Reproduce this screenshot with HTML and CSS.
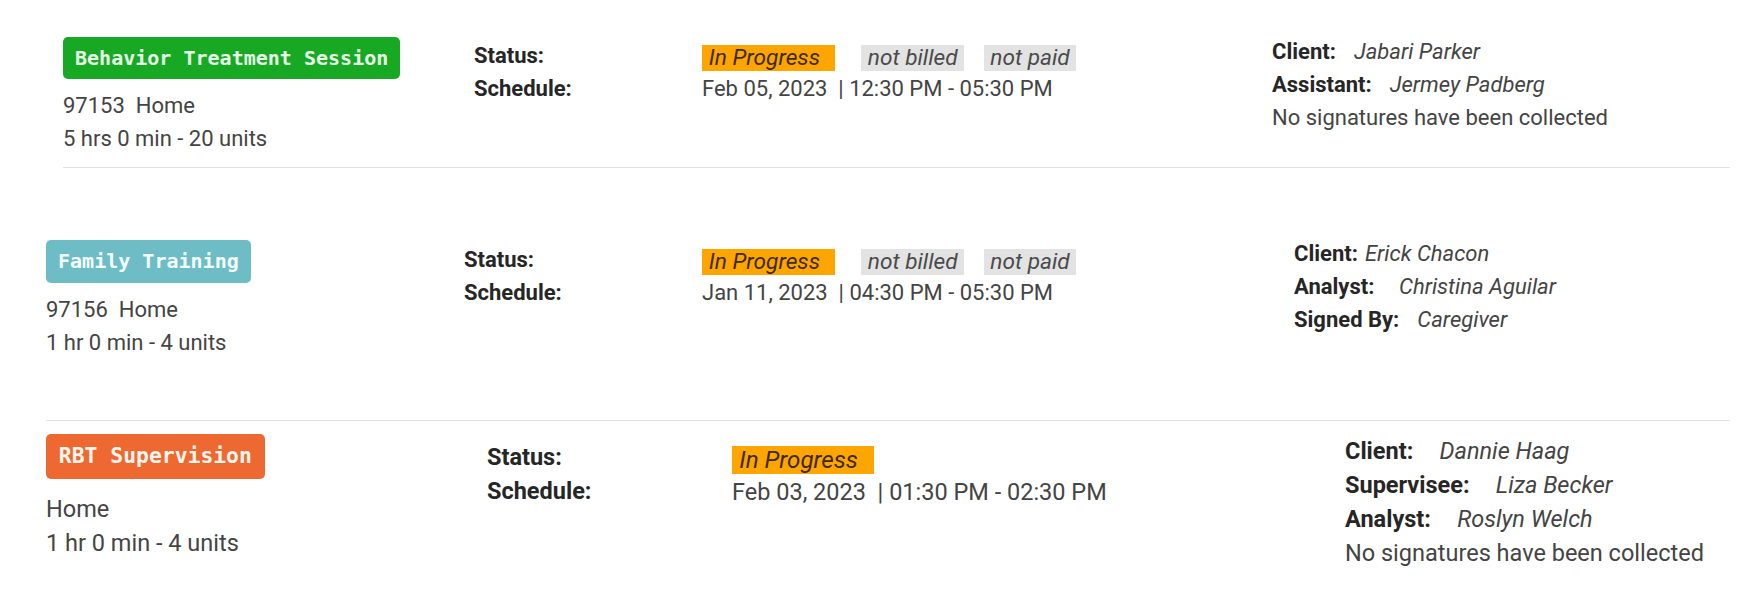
FILE: index.html
```html
<!DOCTYPE html>
<html lang="en">
<head>
<meta charset="utf-8">
<title>Sessions</title>
<link rel="stylesheet" href="styles.css">
</head>
<body>
<div class="sessions">

  <div class="session session--first">
    <div class="col col-main">
      <span class="type type--green">Behavior Treatment Session</span>
      <div class="meta">97153&nbsp; Home</div>
      <div class="meta">5 hrs 0 min - 20 units</div>
    </div>
    <div class="col col-labels">
      <div class="label">Status:</div>
      <div class="label">Schedule:</div>
    </div>
    <div class="col col-values">
      <div class="pills">
        <span class="pill pill--progress">In Progress</span>
        <span class="pill pill--muted">not billed</span>
        <span class="pill pill--muted">not paid</span>
      </div>
      <div class="meta">Feb 05, 2023&nbsp; | 12:30 PM - 05:30 PM</div>
    </div>
    <div class="col col-people">
      <div class="person"><b class="label">Client:</b><i class="name gap-m">Jabari Parker</i></div>
      <div class="person"><b class="label">Assistant:</b><i class="name gap-m">Jermey Padberg</i></div>
      <div class="meta">No signatures have been collected</div>
    </div>
  </div>

  <div class="session session--second">
    <div class="col col-main">
      <span class="type type--teal">Family Training</span>
      <div class="meta">97156&nbsp; Home</div>
      <div class="meta">1 hr 0 min - 4 units</div>
    </div>
    <div class="col col-labels">
      <div class="label">Status:</div>
      <div class="label">Schedule:</div>
    </div>
    <div class="col col-values">
      <div class="pills">
        <span class="pill pill--progress">In Progress</span>
        <span class="pill pill--muted">not billed</span>
        <span class="pill pill--muted">not paid</span>
      </div>
      <div class="meta">Jan 11, 2023&nbsp; | 04:30 PM - 05:30 PM</div>
    </div>
    <div class="col col-people">
      <div class="person"><b class="label">Client:</b><i class="name gap-s">Erick Chacon</i></div>
      <div class="person"><b class="label">Analyst:</b><i class="name gap-l">Christina Aguilar</i></div>
      <div class="person"><b class="label">Signed By:</b><i class="name gap-m">Caregiver</i></div>
    </div>
  </div>

  <div class="session session--third">
    <div class="col col-main">
      <span class="type type--orange">RBT Supervision</span>
      <div class="meta">Home</div>
      <div class="meta">1 hr 0 min - 4 units</div>
    </div>
    <div class="col col-labels">
      <div class="label">Status:</div>
      <div class="label">Schedule:</div>
    </div>
    <div class="col col-values">
      <div class="pills">
        <span class="pill pill--progress">In Progress</span>
      </div>
      <div class="meta">Feb 03, 2023&nbsp; | 01:30 PM - 02:30 PM</div>
    </div>
    <div class="col col-people">
      <div class="person"><b class="label">Client:</b><i class="name gap-l">Dannie Haag</i></div>
      <div class="person"><b class="label">Supervisee:</b><i class="name gap-l">Liza Becker</i></div>
      <div class="person"><b class="label">Analyst:</b><i class="name gap-l">Roslyn Welch</i></div>
      <div class="meta">No signatures have been collected</div>
    </div>
  </div>

</div>
</body>
</html>
```

FILE: styles.css
```css
html, body {
  margin: 0;
  padding: 0;
  background: #ffffff;
}

body {
  font-family: Roboto, "Liberation Sans", Arial, sans-serif;
  color: #444444;
}

.sessions {
  width: 1730px;
}

.session {
  display: grid;
  align-items: start;
  font-size: 22px;
  line-height: 1.5;
}

.session--first {
  margin-left: 63px;
  padding: 35px 0 12px;
  border-bottom: 1px solid #e3e3e3;
  grid-template-columns: 411px 228px 570px 1fr;
}

.session--second {
  margin-left: 46px;
  padding: 69px 0 61px;
  border-bottom: 1px solid #e3e3e3;
  grid-template-columns: 418px 238px 592px 1fr;
}

.session--third {
  margin-left: 46px;
  padding: 13px 0 20px;
  font-size: 23.5px;
  line-height: 1.45;
  grid-template-columns: 441px 245px 613px 1fr;
}

.col-main {
  display: flex;
  flex-direction: column;
  align-items: flex-start;
  padding-top: 2px;
}

.session--second .col-main {
  padding-top: 3px;
}

.session--third .col-main {
  padding-top: 0;
}

.col-labels,
.col-values {
  padding-top: 4px;
}

.session--second .col-labels,
.session--second .col-values,
.session--third .col-labels,
.session--third .col-values {
  padding-top: 6px;
}

.type {
  display: inline-block;
  font-family: "DejaVu Sans Mono", "Liberation Mono", monospace;
  font-weight: 700;
  font-size: 0.91em;
  line-height: 2.1em;
  padding: 0 0.6em;
  border-radius: 5px;
  color: #ffffff;
  margin-bottom: 0.52em;
}

.session--third .type {
  margin-bottom: 0.6em;
}

.type--green {
  background: #17a824;
  color: #e6ffe6;
}

.type--teal {
  background: #6dbcc6;
  color: #f4ffff;
}

.type--orange {
  background: #ee6831;
  color: #fff6ee;
}

.meta {
  font-weight: 400;
  color: #444444;
  white-space: nowrap;
}

.label {
  font-weight: 700;
  color: #262626;
}

.pills {
  display: flex;
  align-items: flex-end;
  box-sizing: border-box;
  height: 1.5em;
  padding-bottom: 1px;
}

.pill {
  display: inline-block;
  font-style: italic;
  font-weight: 400;
  font-size: 1.03em;
  line-height: 1.16em;
  padding: 0 0.28em;
  color: #4a4a4a;
  background: #e3e3e3;
}

.pill--progress {
  background: #ffa500;
  color: #3d2a00;
  padding: 0 0.68em 0 0.3em;
  margin-right: 26px;
}

.pill--muted + .pill--muted {
  margin-left: 20px;
}

.person {
  white-space: nowrap;
}

.name {
  font-style: italic;
  font-weight: 400;
  color: #444444;
}

.gap-s { margin-left: 0.32em; }
.gap-m { margin-left: 0.82em; }
.gap-l { margin-left: 1.12em; }
```
